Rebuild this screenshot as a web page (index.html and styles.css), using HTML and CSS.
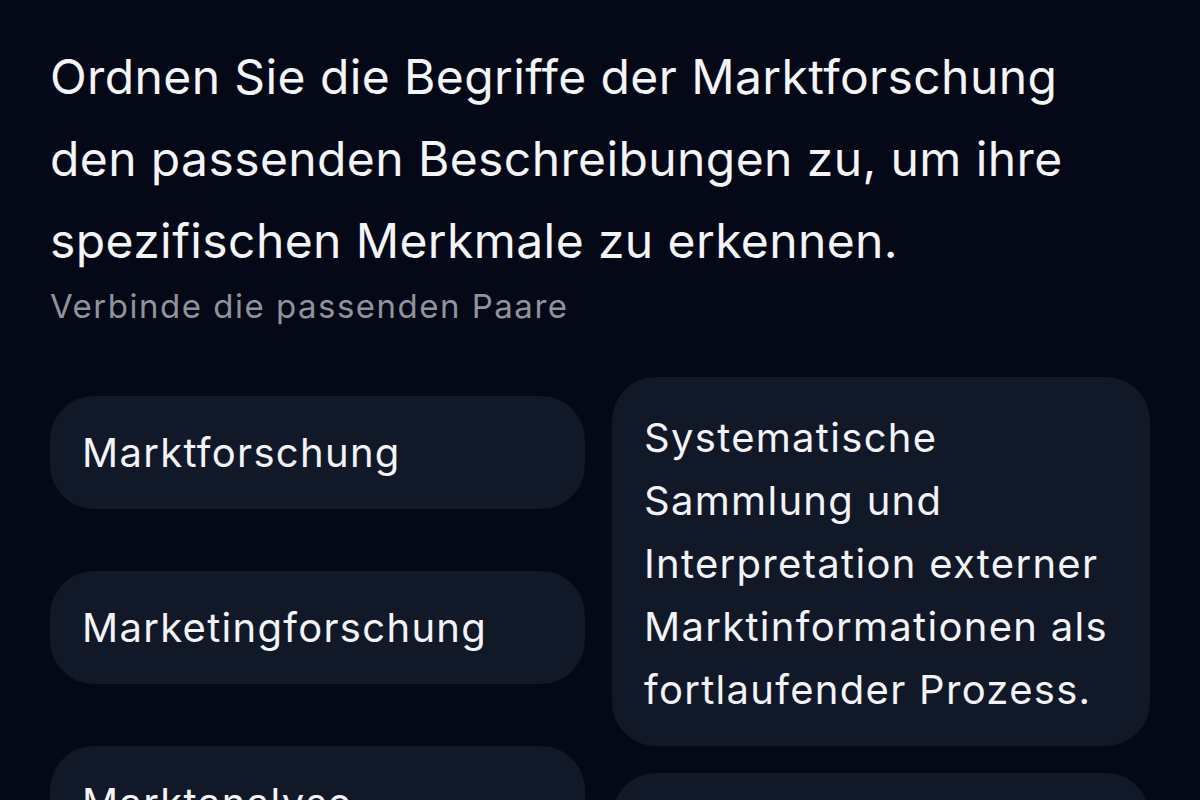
FILE: index.html
```html
<!DOCTYPE html>
<html lang="de">
<head>
<meta charset="utf-8">
<title>Zuordnung</title>
<link rel="stylesheet" href="styles.css">
</head>
<body>
<main class="exercise">
  <header class="prompt">
    <h1 class="question">Ordnen Sie die Begriffe der Marktforschung den passenden Beschreibungen zu, um ihre spezifischen Merkmale zu erkennen.</h1>
    <p class="hint">Verbinde die passenden Paare</p>
  </header>
  <section class="pairs">
    <div class="column terms">
      <button class="card term">Marktforschung</button>
      <button class="card term">Marketingforschung</button>
      <button class="card term">Marktanalyse</button>
    </div>
    <div class="column descriptions">
      <button class="card desc">Systematische Sammlung und Interpretation externer Marktinformationen als fortlaufender Prozess.</button>
      <button class="card desc">Einmalige Untersuchung eines Marktes zu einem bestimmten Zeitpunkt.</button>
    </div>
  </section>
</main>
</body>
</html>
```
FILE: styles.css
```css
html, body {
  margin: 0;
  padding: 0;
  background: #050816;
  height: 100%;
  overflow: hidden;
}

body {
  font-family: Inter, "Noto Sans", sans-serif;
  color: #f3f4f6;
}

.exercise {
  padding: 36px 50px 0 50px;
}

.question {
  margin: 0;
  font-size: 48px;
  font-weight: 400;
  line-height: 82px;
  letter-spacing: 0.4px;
}

.hint {
  margin: 4px 0 0 0;
  font-size: 33px;
  line-height: 40px;
  letter-spacing: 1.5px;
  color: #8f939d;
}

.pairs {
  display: grid;
  grid-template-columns: 535px 538px;
  column-gap: 27px;
  margin-top: 51px;
}

.column {
  display: flex;
  flex-direction: column;
}

.terms {
  padding-top: 19px;
  gap: 62px;
}

.descriptions {
  gap: 27px;
}

.card {
  display: block;
  width: 100%;
  border: 0;
  margin: 0;
  background: #111827;
  color: #f1f3f7;
  font-family: inherit;
  font-size: 40px;
  letter-spacing: 1.3px;
  text-align: left;
  cursor: pointer;
}

.term {
  height: 113px;
  border-radius: 44px;
  padding: 0 32px;
  line-height: 48px;
}

.desc {
  border-radius: 44px;
  padding: 29px 32px 25px 32px;
  line-height: 63px;
}
```
